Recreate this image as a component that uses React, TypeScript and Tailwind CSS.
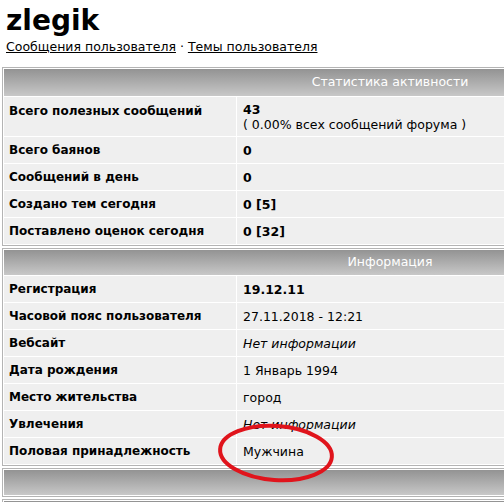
import React from "react";

type Row = { label: string; value: React.ReactNode; tall?: boolean };

const font = { fontFamily: '"DejaVu Sans", Verdana, sans-serif' };

function Table({ title, rows, headerH = "h-[27px]" }: { title?: string; rows: Row[]; headerH?: string }) {
  return (
    <div className="ml-[2px] w-[560px] border border-[#b4b4b4] bg-white p-[1px] flex flex-col gap-[1px]">
      <div className={`grid grid-cols-[232px_306px] gap-[1px] ${headerH} bg-gradient-to-b from-[#939393] to-[#c8c8c8]`}>
        <div />
        <div className="flex items-center justify-center text-[12.5px] text-white">{title}</div>
      </div>
      {rows.map((r, i) => (
        <div key={i} className={`grid grid-cols-[232px_1fr] gap-[1px] ${r.tall ? "h-[39px]" : "h-[26px]"}`}>
          <div
            className={`bg-[#efefef] px-[5px] flex text-[12px] font-bold text-black ${
              r.tall ? "items-start pt-[5px]" : "items-center"
            }`}
          >
            {r.label}
          </div>
          <div className="bg-[#efefef] px-[6px] flex flex-col justify-center text-[12.5px] text-black leading-[15px]">
            {r.value}
          </div>
        </div>
      ))}
    </div>
  );
}

export default function App() {
  const stats: Row[] = [
    {
      label: "Всего полезных сообщений",
      tall: true,
      value: (
        <>
          <span className="font-bold">43</span>
          <span>( 0.00% всех сообщений форума )</span>
        </>
      ),
    },
    { label: "Всего баянов", value: <span className="font-bold">0</span> },
    { label: "Сообщений в день", value: <span className="font-bold">0</span> },
    { label: "Создано тем сегодня", value: <span className="font-bold">0 [5]</span> },
    { label: "Поставлено оценок сегодня", value: <span className="font-bold">0 [32]</span> },
  ];
  const info: Row[] = [
    { label: "Регистрация", value: <span className="font-bold">19.12.11</span> },
    { label: "Часовой пояс пользователя", value: <span>27.11.2018 - 12:21</span> },
    { label: "Вебсайт", value: <span className="italic">Нет информации</span> },
    { label: "Дата рождения", value: <span>1 Январь 1994</span> },
    { label: "Место жительства", value: <span>город</span> },
    { label: "Увлечения", value: <span className="italic">Нет информации</span> },
    { label: "Половая принадлежность", value: <span>Мужчина</span> },
  ];
  return (
    <div className="relative w-[504px] h-[502px] overflow-hidden bg-white" style={font}>
      <div className="px-[6px] pt-[3px]">
        <div className="text-[28px] font-bold leading-[36px] text-black">zlegik</div>
        <div className="text-[12.5px] leading-[16px] text-black">
          <span className="underline">Сообщения пользователя</span>
          <span> · </span>
          <span className="underline">Темы пользователя</span>
        </div>
      </div>
      <div className="mt-[12px] flex flex-col gap-[2px]">
        <Table title="Статистика активности" rows={stats} />
        <Table title="Информация" rows={info} headerH="h-[25px]" />
        <Table rows={[]} headerH="h-[25px]" />
        <Table rows={[]} headerH="h-[25px]" />
      </div>
      <svg className="absolute left-[214px] top-[419px]" width="124" height="68" viewBox="0 0 124 68">
        <ellipse cx="62" cy="34" rx="56" ry="27" fill="none" stroke="#e0141c" strokeWidth="4" transform="rotate(4 62 34)" />
      </svg>
    </div>
  );
}
